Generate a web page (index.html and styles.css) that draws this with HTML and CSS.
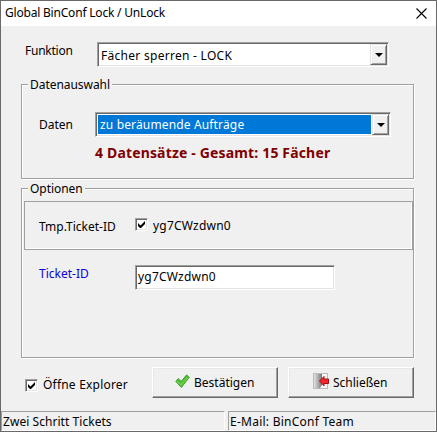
FILE: index.html
```html
<!DOCTYPE html>
<html lang="de">
<head>
    <meta charset="UTF-8">
    <meta name="viewport" content="width=device-width, initial-scale=1.0">
    <title>Global BinConf Lock / UnLock</title>
    <link rel="stylesheet" href="styles.css">
</head>
<body>

<div class="window">
    <header class="titlebar">
        <span class="title">Global BinConf Lock / UnLock</span>
        <svg class="close" width="11" height="11" viewBox="0 0 11 11"><path d="M.5.5l10 10M10.5.5l-10 10" stroke="#000" stroke-width="1.1" fill="none"/></svg>
    </header>

    <main class="content">
        <div class="row row-function">
            <span class="label">Funktion</span>
            <div class="combo combo-function">
                <span class="combo-value">Fächer sperren - LOCK</span>
                <span class="combo-btn"><i class="arrow"></i></span>
            </div>
        </div>

        <section class="group group-data">
            <h2 class="legend">Datenauswahl</h2>
            <div class="row row-data">
                <span class="label">Daten</span>
                <div class="combo combo-data">
                    <span class="combo-value selected">zu beräumende Aufträge</span>
                    <span class="combo-btn"><i class="arrow"></i></span>
                </div>
            </div>
            <p class="summary">4 Datensätze - Gesamt: 15 Fächer</p>
        </section>

        <section class="group group-options">
            <h2 class="legend">Optionen</h2>
            <div class="frame">
                <span class="label">Tmp.Ticket-ID</span>
                <span class="check"><svg width="7" height="7" viewBox="0 0 7 7"><path d="M0 2v3l2 2h1l4-4V0L2.5 4.5z"/></svg></span>
                <span class="check-text">yg7CWzdwn0</span>
            </div>
            <div class="row row-ticket">
                <span class="label link">Ticket-ID</span>
                <div class="input">yg7CWzdwn0</div>
            </div>
        </section>

        <div class="actions">
            <span class="check"><svg width="7" height="7" viewBox="0 0 7 7"><path d="M0 2v3l2 2h1l4-4V0L2.5 4.5z"/></svg></span>
            <span class="explorer">Öffne Explorer</span>
            <button class="btn btn-ok">
                <svg class="icon-ok" width="15" height="15" viewBox="0 0 15 15"><path d="M.8 7.4L3.2 4.6l3 2.8L11.6.9l2.7 2.4L6.4 13.4z" fill="#52bd35" stroke="#3f9f30" stroke-width="1"/><path d="M2.2 7.2l4 3.8 6.6-7.8" fill="none" stroke="#6fd04c" stroke-width="1.4"/></svg>
                <span>Bestätigen</span>
            </button>
            <button class="btn btn-close">
                <svg class="icon-exit" width="17" height="16" viewBox="0 0 17 16">
                    <defs><linearGradient id="door"><stop offset="0" stop-color="#e2e2e2"/><stop offset="1" stop-color="#777"/></linearGradient></defs>
                    <rect x=".5" y=".5" width="14" height="15" fill="#f6f6f6" stroke="#bbb"/>
                    <path d="M1 1h8v11l-2 3H1z" fill="url(#door)"/>
                    <path d="M6.5 8l4.5-4.5V6h4.5v4.5H11v2.3z" fill="#f3262c" stroke="#a50c12"/>
                </svg>
                <span>Schließen</span>
            </button>
        </div>
    </main>

    <footer class="statusbar">
        <div class="panel panel-left">Zwei Schritt Tickets</div>
        <div class="panel panel-right">E-Mail: BinConf Team</div>
    </footer>
</div>

</body>
</html>
```
FILE: styles.css
```css
* {
    box-sizing: border-box;
}
body {
    margin: 0;
    font-family: "Noto Sans", "Open Sans", sans-serif;
    font-size: 12px;
    line-height: 16px;
    color: #000;
    white-space: nowrap;
}
.window {
    display: flex;
    flex-direction: column;
    width: 437px;
    height: 432px;
    border: 1px solid #696969;
    background-color: #f0f0f0;
}
.titlebar {
    display: flex;
    justify-content: space-between;
    height: 25px;
    padding: 4px 9px 0 4px;
    background-color: #fff;
}
.title {
    letter-spacing: -0.2px;
}
.close {
    margin-top: 3px;
}
.content {
    flex: 1;
    padding: 16px 22px 0 20px;
}
.row {
    display: flex;
}
.label {
    flex: none;
}
.row-function {
    height: 25px;
    padding-left: 4px;
}
.row-function .label {
    width: 72px;
    padding-top: 1px;
    letter-spacing: -0.25px;
}
/* sunken 3D edge used by the combo boxes and the text input */
.combo,
.input {
    border: 1px solid;
    border-color: #a0a0a0 #fff #fff #a0a0a0;
    box-shadow: inset 1px 1px #696969, inset -1px -1px #e3e3e3;
    background-color: #fff;
}
.combo {
    display: flex;
    flex: none;
    height: 25px;
    padding: 1px;
}
.combo-function {
    width: 292px;
}
.combo-data {
    width: 296px;
}
.combo-value {
    flex: 1;
    padding: 4px 0 0 2px;
    letter-spacing: 0.28px;
}
.combo-value.selected {
    margin: 1px;
    padding: 2px 0 0 2px;
    background-color: #0078d7;
    color: #fff;
    letter-spacing: 0.15px;
}
.combo-btn {
    display: flex;
    align-items: center;
    justify-content: center;
    width: 17px;
    border: 1px solid;
    border-color: #e3e3e3 #696969 #696969 #e3e3e3;
    box-shadow: inset 1px 1px #fff, inset -1px -1px #a0a0a0;
    background-color: #f0f0f0;
}
.arrow {
    border: 4px solid transparent;
    border-top-color: #000;
    border-bottom: 0;
}
/* etched group box */
.group {
    border: 1px solid #a0a0a0;
    box-shadow: inset 1px 1px #fff, 1px 1px #fff;
}
.group-data {
    height: 95px;
    margin-top: 17px;
}
.group-options {
    height: 170px;
    margin-top: 9px;
}
.legend {
    width: max-content;
    height: 16px;
    margin: -8px 0 0 6px;
    padding: 0 2px;
    background-color: #f0f0f0;
    font-size: 12px;
    font-weight: normal;
    letter-spacing: -0.05px;
}
.row-data {
    margin-top: 19px;
    padding-left: 17px;
}
.row-data .label {
    width: 56px;
    padding-top: 5px;
}
.summary {
    margin: 8px 0 0 73px;
    font-size: 14px;
    font-weight: bold;
    letter-spacing: 0.16px;
    color: #800000;
}
.frame {
    display: flex;
    height: 49px;
    margin: 4px 0 0 2px;
    padding: 16px 0 0 14px;
    border: 1px solid #a0a0a0;
    box-shadow: inset -1px -1px #fff;
}
.frame .label {
    width: 96px;
    padding-top: 1px;
}
.check {
    display: flex;
    align-items: center;
    justify-content: center;
    flex: none;
    width: 13px;
    height: 13px;
    border: 1px solid;
    border-color: #a0a0a0 #fff #fff #a0a0a0;
    box-shadow: inset 1px 1px #696969, inset -1px -1px #e3e3e3;
    background-color: #fff;
}
.check-text {
    margin-left: 5px;
    letter-spacing: 0.2px;
}
.row-ticket {
    margin-top: 15px;
    padding-left: 17px;
}
.row-ticket .label {
    width: 96px;
    padding-top: 1px;
}
.link {
    color: #0b00d6;
}
.input {
    width: 200px;
    height: 25px;
    padding: 3px 0 0 2px;
    letter-spacing: 0.2px;
}
.actions {
    display: flex;
    height: 31px;
    margin-top: 9px;
    padding-left: 4px;
}
.actions .check {
    margin-top: 12px;
}
.explorer {
    flex: none;
    width: 109px;
    margin-left: 5px;
    padding-top: 10px;
    letter-spacing: 0.2px;
}
.btn {
    display: flex;
    flex: none;
    width: 126px;
    height: 31px;
    padding: 0;
    border: 1px solid;
    border-color: #fff #696969 #696969 #fff;
    box-shadow: inset -1px -1px #a0a0a0, inset 1px 1px #e8e8e8;
    background-color: #f0f0f0;
    font: inherit;
    color: #000;
}
.btn-close {
    margin-left: 10px;
}
.btn span {
    padding-top: 7px;
}
.icon-ok {
    margin: 6px 4px 0 22px;
}
.icon-exit {
    margin: 5px 3px 0 24px;
}
.statusbar {
    display: flex;
    gap: 3px;
    height: 20px;
}
.panel {
    padding: 2px 0 0 1px;
    border: 1px solid;
    border-color: #a0a0a0 #fff #fff #a0a0a0;
}
.panel-left {
    width: 224px;
    letter-spacing: 0.05px;
}
.panel-right {
    flex: 1;
    letter-spacing: 0.25px;
}
```
